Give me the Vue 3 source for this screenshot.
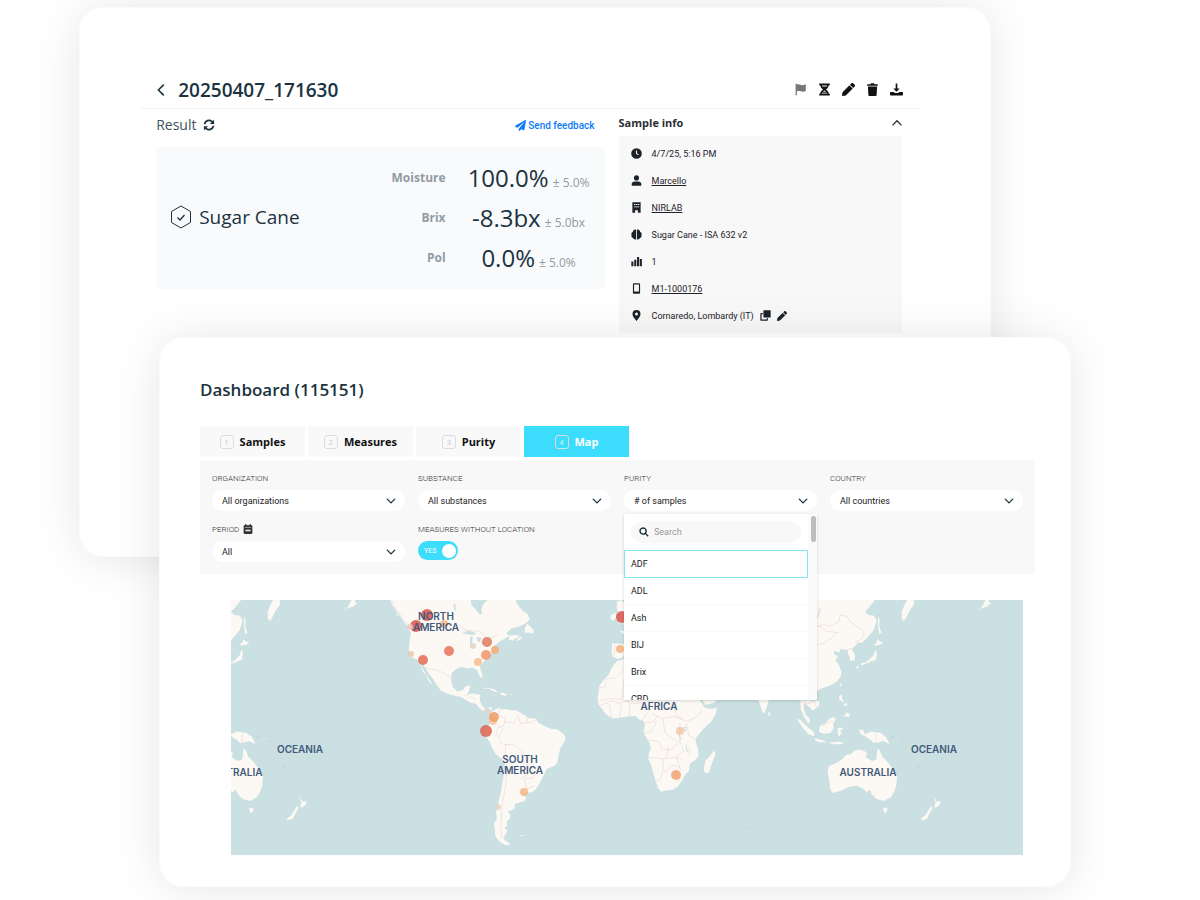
<script setup>
import { h, ref } from 'vue'

const glyphs = {
  flag: ['M2 1h1.6v1c3-1.2 5 .9 7.2.7 1.400-.1 2.500-.6 3.700-1.100v8.200c-4.500 2.300-6.500-1-10.900.4V15H2z'],
  hourglass: ['M1.500.5h13v2.300h-1.200C13 5.200 11.500 6.900 9.700 8c1.800 1.100 3.300 2.800 3.600 5.200h1.200v2.300h-13v-2.300h1.200C3 10.800 4.500 9.100 6.300 8 4.500 6.900 3 5.200 2.700 2.800H1.500zM4.700 3.200h6.600l-.5 1.200H5.200zM8 9.300l2 1.500H6zM5.100 11.900h5.800l.5 1.100H4.600z'],
  pencil: ['M15.600 4.400l-1.500 1.500c-.1.100-.4.100-.5 0L10.100 2.400c-.1-.1-.1-.4 0-.5L11.600.4c.6-.6 1.500-.6 2.100 0l1.900 1.900c.6.6.6 1.500 0 2.100zM8.900 3.100L.7 11.300 0 15.100c-.1.500.4 1 .9.9l3.800-.7 8.200-8.200c.1-.1.100-.4 0-.5L9.400 3.100c-.1-.1-.4-.1-.5 0z'],
  trash: ['M1.500 1.500h4l.7-1.200h3.600l.7 1.200h4v1.800h-13zM2.300 4.300h11.400l-.6 10.200c-.1.900-.7 1.500-1.500 1.500H4.400c-.8 0-1.400-.6-1.500-1.500z'],
  download: ['M7 .5h2v6.200h2.900L8 10.800 4.100 6.700H7zM1 11h3.400c1 1.900 6.200 1.900 7.200 0H15c.6 0 1 .4 1 1v2.500c0 .600-.4 1-1 1H1c-.6 0-1-.4-1-1V12c0-.6.4-1 1-1z'],
  plane: ['M14.900.1L.4 8.500c-.6.300-.5 1.100.1 1.300l3.300 1.400 9-7.900c.2-.2.400.1.300.300L5.500 12.700v2.500c0 .7.900 1 1.300.5l2-2.400 3.900 1.600c.4.200 1-.1 1-.6L16 .9c.1-.6-.6-1.100-1.100-.8z'],
  clock: ['M8 .3a7.700 7.700 0 1 0 0 15.400A7.700 7.700 0 0 0 8 .3zM7.200 3.500h1.500v4l2.600 1.900-.8 1.200-3.300-2.400z'],
  user: ['M8 .5a3.700 3.700 0 1 0 0 7.400A3.700 3.700 0 0 0 8 .5zM1 15.500v-2C1 10.800 3 9.400 5.300 9.400h5.400c2.300 0 4.300 1.400 4.300 4.100v2z'],
  building: ['M2 .5h12v15h-4V12H6v3.500H2zM4.500 3v1.300h2V3zM7.200 3v1.300h2V3zM10 3v1.300h2V3zM4.500 6.500v1.300h7.500V6.500z'],
  brain: ['M7.400 1.200v13.600C5.700 16 3.500 15 3.100 13.200 1 12.700 0 10.600.9 8.900 0 7.300.7 5 2.600 4.500 2.800 1.300 5.700-.2 7.400 1.200zM8.600 1.200v13.600c1.700 1.200 3.900.2 4.300-1.600 2.100-.5 3.100-2.600 2.200-4.300.9-1.600.2-3.900-1.700-4.400C13.200 1.300 10.300-.2 8.600 1.200z'],
  bars: ['M.500 8h3v7h-3zM4.700 5.500h3V15h-3zM8.800 1.500h3V15h-3zM12.800 4.500h3V15h-3z'],
  phone: ['M4.500.3h7c1 0 1.700.7 1.700 1.700v12c0 1-.7 1.700-1.700 1.700h-7c-1 0-1.700-.7-1.700-1.700V2c0-1 .7-1.700 1.700-1.700zM4.500 2.200v10h7v-10z'],
  pin: ['M8 0a5.800 5.800 0 0 0-5.800 5.800C2.200 8.600 4 11 8 16c4-5 5.800-7.400 5.800-10.200A5.800 5.800 0 0 0 8 0zM8 3.700a2.200 2.200 0 1 1 0 4.400 2.200 2.200 0 0 1 0-4.400z'],
  copy: ['M6 .5h8.500c.6 0 1 .4 1 1V10c0 .600-.4 1-1 1H6c-.6 0-1-.4-1-1V1.500c0-.6.4-1 1-1zM1.500 4.500H4v1.800H2.300v7.400h7.400V12h1.800v2.500c0 .6-.4 1-1 1h-9c-.6 0-1-.4-1-1v-9c0-.6.4-1 1-1z'],
  calendar: ['M3.500 0h2v2h5V0h2v2h1.500c.6 0 1 .4 1 1v11.500c0 .8-.7 1.500-1.500 1.500h-11C1.700 16 1 15.300 1 14.500V3c0-.6.4-1 1-1h1.500zM3 5.500v1h10v-1zM4 9v2.500h8V9z'],
  search: ['M6.500.5a6 6 0 1 0 3.500 10.900l4 4 1.500-1.500-4-4A6 6 0 0 0 6.500.500zM6.500 2.700a3.800 3.800 0 1 1 0 7.600 3.800 3.800 0 0 1 0-7.600z'],
  refresh: ['M1 7C1.400 3.200 4.500.7 8 .7c2 0 3.700.8 5 2L14.800 1v5.500H9.200L11.300 4.400A4.700 4.700 0 0 0 3.300 7zM15 9c-.4 3.800-3.500 6.300-7 6.300-2 0-3.700-.8-5-2L1.200 15V9.500h5.600l-2.100 2.100A4.700 4.700 0 0 0 12.700 9z'],
}
const lines = {
  left: 'M11 1.500L4.500 8l6.500 6.500',
  up: 'M1.500 11L8 4.500l6.500 6.500',
  down: 'M2 5l6 6 6-6',
}

function Icon(props) {
  const size = props.size || 12
  const base = { viewBox: '0 0 16 16', width: size, height: size, 'aria-hidden': 'true' }
  if (lines[props.name]) {
    return h('svg', base, [
      h('path', { d: lines[props.name], fill: 'none', stroke: 'currentColor', 'stroke-width': 2.2, 'stroke-linecap': 'round', 'stroke-linejoin': 'round' }),
    ])
  }
  return h('svg', base, glyphs[props.name].map((d) => h('path', { d, fill: 'currentColor', 'fill-rule': 'evenodd' })))
}
Icon.props = ['name', 'size']

const actions = [
  { icon: 'flag', label: 'Flag' },
  { icon: 'hourglass', label: 'Pending' },
  { icon: 'pencil', label: 'Edit' },
  { icon: 'trash', label: 'Delete' },
  { icon: 'download', label: 'Download' },
]
const results = [
  { name: 'Moisture', value: '100.0%', tol: '± 5.0%' },
  { name: 'Brix', value: '-8.3bx', tol: '± 5.0bx' },
  { name: 'Pol', value: '0.0%', tol: '± 5.0%' },
]
const info = [
  { icon: 'clock', text: '4/7/25, 5:16 PM' },
  { icon: 'user', text: 'Marcello', link: true },
  { icon: 'building', text: 'NIRLAB', link: true },
  { icon: 'brain', text: 'Sugar Cane - ISA 632 v2' },
  { icon: 'bars', text: '1' },
  { icon: 'phone', text: 'M1-1000176', link: true },
  { icon: 'pin', text: 'Cornaredo, Lombardy (IT)', tools: true },
]
const tabs = ['Samples', 'Measures', 'Purity', 'Map']
const active = ref('Map')
const options = ['ADF', 'ADL', 'Ash', 'BIJ', 'Brix', 'CBD']
const chosen = ref('ADF')
const withoutLocation = ref(true)

const dots = [
  [196, 15, 6, '#d9534a'], [185, 26, 6, '#d9534a'], [213, 24, 4, '#f5b987'], [179, 27, 3, '#e6cdbd'],
  [256, 42, 5, '#e47a5f'], [218, 51, 5, '#e5735a'], [192, 60, 5, '#e36b55'], [180, 54, 3, '#eccab0'],
  [264, 50, 4, '#f5ab74'], [255, 55, 5, '#f0946a'], [247, 62, 4, '#f6bd92'], [242, 46, 3, '#e6d3c2'],
  [256, 111, 3, '#dcd5ca'], [262, 121, 4, '#f3c49c'], [263, 117, 5, '#f29c62'], [255, 131, 6, '#dc6350'],
  [293, 192, 4, '#f5b783'], [267, 207, 3, '#e3d5cb'], [391, 17, 6, '#d9534a'], [389, 49, 4, '#f6b27c'],
  [449, 131, 4, '#f3c6a6'], [445, 175, 5, '#f3a273'],
]
</script>

<template>
  <main class="page">
    <section class="card sample">
      <header class="sample-head">
        <button class="back" type="button" aria-label="Back"><Icon name="left" :size="12" /></button>
        <h1>20250407_171630</h1>
        <div class="actions">
          <button v-for="a in actions" :key="a.icon" type="button" :aria-label="a.label" :class="a.icon"><Icon :name="a.icon" :size="13" /></button>
        </div>
      </header>
      <div class="sample-body">
        <div class="result">
          <div class="result-head">
            <h2>Result</h2>
            <button type="button" aria-label="Refresh"><Icon name="refresh" :size="12" /></button>
            <a href="#feedback" class="feedback"><Icon name="plane" :size="11" />Send feedback</a>
          </div>
          <div class="result-panel">
            <div class="substance">
              <svg viewBox="0 0 22 24" width="22" height="24" fill="none" stroke="currentColor" stroke-linejoin="round" aria-hidden="true">
                <path d="M11 1l9.500 5.500v11L11 23l-9.500-5.500v-11z" />
                <path d="M7.500 12.500l2.500 2.500 4.500-5" stroke-width="1.300" />
              </svg>
              <span>Sugar Cane</span>
            </div>
            <dl class="values">
              <div v-for="r in results" :key="r.name">
                <dt>{{ r.name }}</dt>
                <dd><b>{{ r.value }}</b><small>{{ r.tol }}</small></dd>
              </div>
            </dl>
          </div>
        </div>
        <aside class="info">
          <button class="info-head" type="button"><span>Sample info</span><Icon name="up" :size="10" /></button>
          <ul>
            <li v-for="i in info" :key="i.icon">
              <Icon :name="i.icon" :size="11" />
              <a v-if="i.link" href="#info">{{ i.text }}</a>
              <span v-else>{{ i.text }}</span>
              <template v-if="i.tools">
                <button type="button" aria-label="Copy location"><Icon name="copy" :size="11" /></button>
                <button type="button" aria-label="Edit location"><Icon name="pencil" :size="10" /></button>
              </template>
            </li>
          </ul>
        </aside>
      </div>
    </section>

    <section class="card dashboard">
      <h1>Dashboard (115151)</h1>
      <nav class="tabs">
        <button v-for="(t, n) in tabs" :key="t" type="button" :class="{ on: active === t }" @click="active = t">
          <i>{{ n + 1 }}</i>{{ t }}
        </button>
      </nav>
      <div class="filters">
        <div class="field">
          <label for="org">ORGANIZATION</label>
          <div class="pick"><select id="org"><option>All organizations</option></select><Icon name="down" :size="10" /></div>
        </div>
        <div class="field">
          <label for="sub">SUBSTANCE</label>
          <div class="pick"><select id="sub"><option>All substances</option></select><Icon name="down" :size="10" /></div>
        </div>
        <div class="field">
          <label for="pur">PURITY</label>
          <div class="pick"><select id="pur"><option># of samples</option></select><Icon name="down" :size="10" /></div>
          <div class="menu">
            <div class="menu-list">
              <div class="search"><Icon name="search" :size="10" /><input type="text" placeholder="Search" aria-label="Search" /></div>
              <button v-for="o in options" :key="o" type="button" :class="{ on: chosen === o }" @click="chosen = o">{{ o }}</button>
            </div>
            <div class="track"><div class="thumb"></div></div>
          </div>
        </div>
        <div class="field">
          <label for="cty">COUNTRY</label>
          <div class="pick"><select id="cty"><option>All countries</option></select><Icon name="down" :size="10" /></div>
        </div>
        <div class="field">
          <label for="per">PERIOD <Icon name="calendar" :size="10" /></label>
          <div class="pick"><select id="per"><option>All</option></select><Icon name="down" :size="10" /></div>
        </div>
        <div class="field">
          <label for="loc">MEASURES WITHOUT LOCATION</label>
          <label class="switch">
            <input id="loc" v-model="withoutLocation" type="checkbox" />
            <span>YES</span><i></i>
          </label>
        </div>
      </div>

      <svg class="map" viewBox="0 0 792 255" role="img" aria-label="Sample map">
        <defs>
          <g id="pacific" transform="translate(549 -10) scale(.33333)">
            <g class="land">
              <path d="M-60 20H294L272 48 256 66 266 74 282 76 291 92 282 120 264 142 247 158 232 160 224 170 216 176 226 196 225 210 211 215 208 198 202 190 204 180 192 180 183 176 178 188 164 184 163 192 174 198 172 206 166 210 178 226 185 244 184 258 170 276 150 288 128 295 112 302 60 330 118 332 118 348 98 363 88 352 78 344 72 340 72 354 78 374 90 386 90 402 82 398 70 378 62 360 60 330 20 300-60 250z" />
              <path d="M382 28H402L403 44 392 58 384 74 372 95 364 84 365 64 372 46z" />
              <path d="M293 76l7 14-2 18 7 20-8 6-4-26zM292 146l8 8 12 2-10 8-14 4-8-4 8-6zM286 176l6 14-4 20-18 6-8 6-10-6 14-6 14-14zM242 220l18-6 2 6-20 8zM230 226l8 2-4 10-6-4z" />
              <path d="M182 278l4-2-2 16-6-6zM178 316l8-2 2 14 6 12-10-6-8-8zM200 366l10 6-2 12-8-4-10 2zM190 344l10-8 2 10-6 4z" />
              <path d="M48 384l12 4 18 18 24 20 2 14-18-6-20-22zM104 444l24 6 16 6-24 2-18-8zM118 405l16-4 14-16 12-5 8 8-8 12 2 14-10 16-20 2-16-6zM172 414l8-2 12 2-10 8 8 18-8-8-4 10-4-8zM236 420l14-2 4 14 20-8 28 4 18 14 10 22-20-10-14 4-14 2-8-8-18-12-16-8zM146 456h14l18-2 18 4-18 6-24-2z" />
              <path d="M142 540L148 526 166 520 186 508 198 494 212 492 224 480 240 478 256 484 262 490 258 502 276 512 288 508 292 474 300 480 308 500 318 510 330 524 342 540 352 558 350 586 344 604 334 622 312 634 290 628 276 614 268 600 260 608 248 596 230 588 206 592 186 602 156 610 150 598z" />
              <path d="M308 652l16 2-4 14-8 2z" />
              <path d="M456 612l10 14 4 8 14-2-4 12-12 10-6-4 4-12zM452 648l8 4-10 18-10 18-16 4-2-6 14-12z" />
              <path d="M572 68l20-6 12-10 14-26h14l-6 10 10 2-14 12-18 6-12 8z" />
            </g>
            <path class="edge" d="M112 110l20-6 20 4 24-12 4-20 20 2 14 20 24 16 14 10-6 22-22 12M112 104l30 20 32 4-20 16-20 14-22 8M288 430v30M120 408l20-8 20-10M62 334l20 8 20-8 8 18M196 182l14-6 12 2" />
            <path class="edge blue" d="M122 56l-10 26M330 444l14-6M364 450l12 8M410 526l12 8M480 512l12-8M620 306l4 4" />
          </g>
        </defs>
        <rect class="sea" width="792" height="255" />
        <use href="#pacific" />
        <use href="#pacific" x="-634" />
        <g transform="translate(159 -10) scale(.33333)">
          <g class="land">
            <path d="M-4 20l10 26 16 22 10 12 16 22 8 8-2 8 8 10-4 22-2 30 6 20 10 6 10 4 12 12 4 14 12 18 10 16 8 14-6-2-10-14-4-12-12-12-4-18-8-10 12 6 10 12 10 18 12 14 12 20 12 16 20 10 22 6 20 4 16 10 14 8 14 2 10 14 16 10 12-8 12 4-2-12-10 2-12 2-8-8-6-16 2-16-22-4-16 2 6-16 4-10-18 2-8 12-16 4-12-12-6-18 2-24 12-12 18-6 18 4 14-2 12 6 8 18 8 10 2-14-8-22 4-8 16-16 12-10 4-14 6-16 12-8 10-8 14-8 10-4-4 10 14 2 22-14-6-4-28 2-6-6 14-14 24-6 18-8 14-14-6-16-18-12-16-22-4-18z" />
            <path d="M404 112l8-12 8 8 12 12-2 12-14-4-14 2zM386 142l14-4-10 12-14 6zM36 88l10 6 14 18-12-6zM16 66l8 6 4 10-8-6z" />
            <path d="M272 298l16-6 22 4 20 12-16-2-20-10zM330 306l18 4 4 8-20-2zM306 312l10 4-6 2zM360 312h8v4h-8z" />
            <path d="M304 366L318 356 330 352 334 358 346 356 360 360 376 360 390 366 408 378 420 384 438 385 446 398 470 410 484 416 502 417 522 432 528 446 520 462 512 474 508 490 504 512 498 526 484 532 470 538 462 556 450 580 436 600 424 608 404 608 400 614 410 624 404 634 384 640 376 642 374 656 364 662 354 664 362 676 360 686 350 696 352 706 344 714 354 722 346 734 342 748 354 756 363 764 350 767 334 760 320 746 314 734 314 716 310 702 318 690 320 680 316 668 322 650 326 630 332 606 336 580 340 560 344 536 343 516 328 502 316 492 306 474 298 456 288 442 281 428 286 414 296 404 306 390z" />
            <path d="M390 736l14-4-4 6-12 2z" />
          </g>
          <path class="sea" d="M242 20l2 24 14 16 12 14 6-4-2-14 6-14 24-22zM190 40l6 2 2 22-6-8zM216 130l16-8 20 4 6 8-20 0zM240 142l8-4-2 30-6-2zM260 140l14 4-4 14-8-6zM272 156l16 0-8 6zM296 146l12-2-8 8z" />
          <path class="edge" d="M4 32l18 34 16 10M206 106l22 14 40 4 24 20 20-4 14-8M108 234l28 6 24 8 20 14 12 14M222 318l10-8 6 12M244 320l14 10M330 352l-4 22 18 12-2 20-20 8-4 26M342 396l30 2 14-24M384 378l8 22M410 380l4 20M390 400l28-2 22-8M342 412l-16 28 6 20 24 6M344 462l32 4 20 16 14 28 2 44-18 12M346 466l4 80-4 46-10 60-4 60 4 32M402 568l24-4 8-10M404 570l6 28 24-10M300 390l22 12 14 14" />
        </g>
        <g transform="translate(349 -10) scale(.33333)">
          <g class="land">
            <path d="M112 212L140 204 200 200 300 230 340 300 358 328 374 352 392 356 412 352 408 372 394 396 376 412 360 430 348 446 350 462 356 478 356 500 344 512 330 522 328 542 316 554 308 570 294 590 278 600 258 602 240 607 234 594 226 574 219 548 212 524 204 506 206 488 212 476 206 456 194 436 190 424 194 404 188 392 178 390 166 378 140 381 120 384 98 386 78 374 66 358 54 342 52 322 56 300 56 288 70 270 84 256 92 238 100 224z" />
            <path d="M366 330h46l-12 10-24 6zM534 328h34l-6 20-8 24-8-6zM564 364l8 6-2 10-6-4zM402 480l6 12-10 24-10 32-14 2-4-12 6-28 12-10zM96 158l42 4-8 40-16 6-16-6-4-14zM110 34l14-4 12 12-4 60-20-4 8-16-10-24zM92 76l14-10 6 14-12 12-10-4zM118 120l20 4v10l-14-4z" />
          </g>
          <path class="edge" d="M76 268l30-4 26-22M56 294l20-4 2-16M56 332l30-6 40 2 6-60M62 346l34-14 22 8 20-8 20 10 24-4M88 340l8 44M124 340l-4 44M150 340l-2 42M184 392l20-24 14-14M194 398l28-2 10-20M196 430l20-8 14-28M216 370l28 16 36-6 28 4M280 350l14 34 26 10 30-12 16-20M248 386l8 44 44 30M206 450l30 4 12 26 30-2 14-20M206 502l44 4 34-4 22 4M250 506l-2 40-8 24-14 4M260 500l6-30M300 400l-2 50 14 34M320 402l6 34 22 14M312 484l-22 14 10 40 10 6M250 550l28-24 24 8M290 574l10-4M326 470l4 28M104 162l-2 36" />
          <path class="edge blue" d="M308 414l10-2-2 12zM298 434l6 18M318 464l4 22M238 600l2 8M504 714l8 2" />
        </g>
        <circle v-for="(d, n) in dots" :key="n" :cx="d[0]" :cy="d[1]" :r="d[2]" :fill="d[3]" opacity=".85" />
        <g class="names">
          <text x="205" y="20">NORTH</text>
          <text x="205" y="31">AMERICA</text>
          <text x="289" y="163">SOUTH</text>
          <text x="289" y="174">AMERICA</text>
          <text x="428" y="110">AFRICA</text>
          <text x="69" y="153">OCEANIA</text>
          <text x="703" y="153">OCEANIA</text>
          <text x="3" y="176">AUSTRALIA</text>
          <text x="637" y="176">AUSTRALIA</text>
        </g>
      </svg>
    </section>
  </main>
</template>

<style>
body {
  margin: 0;
  background: #fff;
}
</style>

<style scoped>
.page {
  overflow: hidden;
  padding: 7px 0 13px;
  font-family: "Open Sans", "Noto Sans", sans-serif;
  color: #1b3341;
}
.page * {
  box-sizing: border-box;
}
.page svg {
  display: block;
  flex: none;
}
h1, h2, dl, dd, ul {
  margin: 0;
  padding: 0;
}
button {
  border: 0;
  padding: 0;
  background: none;
  color: inherit;
  font: inherit;
  cursor: pointer;
}
.card {
  width: 76%;
  border-radius: 25px;
  background: #fff;
  box-shadow: inset 0 0 0 1px #fbfbfb, 0 2px 48px rgba(0, 0, 0, 0.1);
}
h1 {
  font-size: 19px;
  line-height: 26px;
  font-weight: 600;
}

.sample {
  margin-left: 6.6%;
  padding: 64px 72px 224px 61px;
}
.sample-head {
  display: flex;
  align-items: center;
  height: 38px;
  padding: 0 16px 0 15px;
  border-bottom: 1px solid #f3f3f3;
}
.back {
  margin-right: 11px;
}
.actions {
  display: flex;
  gap: 11px;
  margin-left: auto;
  color: #111;
}
.actions .flag {
  color: #777;
}
.sample-body {
  display: grid;
  grid-template-columns: 449fr 284fr;
  gap: 14px;
  align-items: start;
  padding: 0 17px 0 16px;
}
.result-head {
  display: flex;
  align-items: center;
  gap: 7px;
  height: 31px;
  padding-right: 10px;
}
h2 {
  font-size: 14px;
  font-weight: 400;
  color: #40535e;
}
.feedback {
  display: flex;
  align-items: center;
  gap: 2px;
  margin-left: auto;
  padding-top: 2px;
  font-family: Roboto, sans-serif;
  font-size: 10px;
  font-weight: 500;
  color: #0d7bf5;
  text-decoration: none;
}
.result-panel {
  display: flex;
  align-items: center;
  justify-content: space-between;
  margin-top: 7px;
  padding: 10px 0 12px 14px;
  border-radius: 5px;
  background: #f9fafc;
}
.substance {
  display: flex;
  align-items: center;
  gap: 7px;
  font-size: 19px;
}
.values > div {
  display: grid;
  grid-template-columns: 80px 152px;
  gap: 7px;
  align-items: center;
  height: 40px;
}
dt {
  text-align: right;
  font-size: 12px;
  font-weight: 700;
  color: #919ba1;
}
dd {
  text-align: center;
  white-space: nowrap;
}
dd b {
  font-size: 24px;
  font-weight: 400;
}
dd small {
  margin-left: 4px;
  font-size: 12px;
  color: #919ba1;
}
.info-head {
  display: flex;
  align-items: center;
  justify-content: space-between;
  width: 100%;
  height: 27px;
  font-size: 11px;
  font-weight: 700;
  color: #2b2f36;
}
.info ul {
  padding: 4px 12px;
  list-style: none;
  background: #f8f8f8;
  font-family: Roboto, sans-serif;
  font-size: 9px;
  color: #1d2228;
}
.info li {
  display: flex;
  align-items: center;
  gap: 6px;
  height: 27px;
}
.info li > svg {
  margin-right: 4px;
}
.info a {
  color: inherit;
}

.dashboard {
  position: relative;
  margin: -220px 0 0 13.25%;
  padding: 40px 36px 32px 41px;
}
.dashboard h1 {
  font-size: 17px;
}
.tabs {
  display: flex;
  gap: 3px;
  margin: 23px 0 3px;
}
.tabs button {
  display: flex;
  align-items: center;
  justify-content: center;
  gap: 6px;
  width: 105px;
  height: 31px;
  background: #f9f9f9;
  font-size: 11px;
  font-weight: 700;
  color: #111;
}
.tabs i {
  width: 14px;
  height: 14px;
  border: 1px solid #dcdcdc;
  border-radius: 3px;
  font-size: 8px;
  line-height: 12px;
  font-style: normal;
  font-weight: 400;
  color: #ccc;
}
.tabs .on {
  background: #3cdcfd;
  color: #fff;
}
.tabs .on i {
  color: #d8f5fb;
}
.filters {
  display: grid;
  grid-template-columns: repeat(4, 1fr);
  gap: 12px 13px;
  padding: 12px;
  background: #f8f8f8;
  font-family: Roboto, sans-serif;
}
.field {
  position: relative;
}
.field > label:first-child {
  display: flex;
  align-items: center;
  gap: 4px;
  height: 12px;
  margin-bottom: 6px;
  font-size: 8px;
  font-weight: 300;
  color: #333;
}
.pick {
  position: relative;
}
.pick select {
  display: block;
  width: 100%;
  height: 21px;
  padding: 0 10px;
  border: 0;
  border-radius: 11px;
  appearance: none;
  background: #fff;
  font-family: Roboto, sans-serif;
  font-size: 9px;
  color: #222;
}
.pick svg {
  position: absolute;
  top: 6px;
  right: 9px;
  pointer-events: none;
}
.switch {
  position: relative;
  display: flex;
  align-items: center;
  justify-content: space-between;
  width: 40px;
  height: 19px;
  padding: 0 1px 0 6px;
  border-radius: 10px;
  background: #3cdcfd;
  font-size: 7px;
  color: #fff;
}
.switch input {
  position: absolute;
  inset: 0;
  margin: 0;
  opacity: 0;
}
.switch i {
  width: 14px;
  height: 14px;
  margin-right: 1px;
  border-radius: 50%;
  background: #fff;
}
.menu {
  position: absolute;
  top: 42px;
  left: 0;
  z-index: 2;
  display: flex;
  width: 100%;
  height: 186px;
  overflow: hidden;
  background: #fff;
  box-shadow: 0 1px 3px rgba(0, 0, 0, 0.15);
}
.menu-list {
  flex: 1;
  padding-top: 7px;
}
.search {
  display: flex;
  align-items: center;
  gap: 5px;
  height: 22px;
  margin: 0 7px;
  padding: 0 8px;
  border-radius: 11px;
  background: #f8f8f8;
}
.search + button {
  margin-top: 7px;
}
.search input {
  width: 100%;
  border: 0;
  padding: 0;
  outline: 0;
  background: none;
  font-family: Roboto, sans-serif;
  font-size: 9px;
}
.search input::placeholder {
  color: #999;
}
.menu-list button {
  display: block;
  width: 100%;
  height: 27px;
  padding: 0 7px;
  border-bottom: 1px solid #f8f8f8;
  text-align: left;
  font-size: 9px;
  color: #222;
}
.menu-list .on {
  height: 28px;
  padding: 0 6px;
  border: 1px solid #84e6f8;
}
.track {
  width: 9px;
  padding: 2px 1px 0 3px;
  background: #fafafa;
}
.thumb {
  height: 26px;
  border-radius: 3px;
  background: #bdbdbd;
}
.map {
  width: calc(100% - 43px);
  margin: 26px 0 0 31px;
}
.sea {
  fill: #cae0e2;
}
.land {
  fill: #fcf9f4;
  stroke: #b9d5d8;
  stroke-width: 1;
}
.edge {
  fill: none;
  stroke: #ecd8da;
  stroke-width: 2;
}
.blue {
  stroke: #afcdd4;
}
.names {
  fill: #43597a;
  font-family: Inter, sans-serif;
  font-size: 10px;
  font-weight: 600;
  text-anchor: middle;
}
</style>
